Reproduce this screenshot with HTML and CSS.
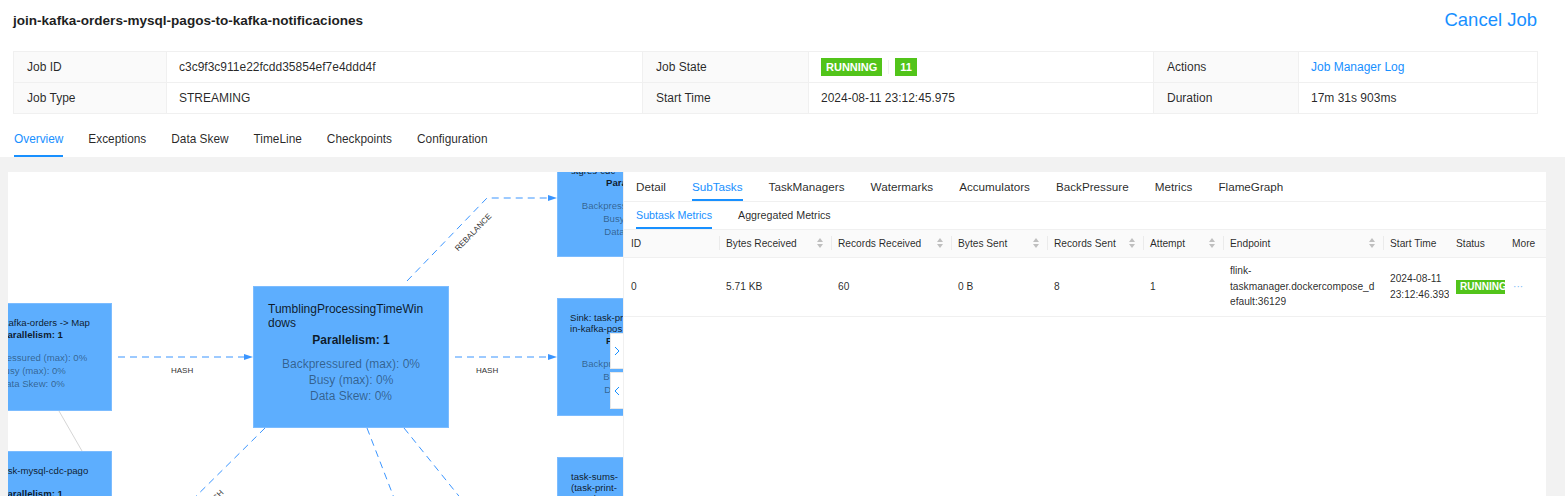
FILE: index.html
```html
<!DOCTYPE html>
<html lang="en">
<head>
<meta charset="utf-8">
<title>Flink Job</title>
<link rel="stylesheet" href="styles.css">
</head>
<body>
<div class="page">
  <header class="job-head">
    <h1 class="job-title">join-kafka-orders-mysql-pagos-to-kafka-notificaciones</h1>
    <a class="cancel">Cancel Job</a>
  </header>

  <table class="desc">
    <colgroup>
      <col class="dc1"><col class="dc2"><col class="dc3"><col class="dc4"><col class="dc5"><col class="dc6">
    </colgroup>
    <tr>
      <th>Job ID</th>
      <td>c3c9f3c911e22fcdd35854ef7e4ddd4f</td>
      <th>Job State</th>
      <td><div class="state"><span class="tag">RUNNING</span><span class="tag-sep"></span><span class="tag">11</span></div></td>
      <th>Actions</th>
      <td><a class="link">Job Manager Log</a></td>
    </tr>
    <tr>
      <th>Job Type</th>
      <td>STREAMING</td>
      <th>Start Time</th>
      <td>2024-08-11 23:12:45.975</td>
      <th>Duration</th>
      <td>17m 31s 903ms</td>
    </tr>
  </table>

  <nav class="tabs">
    <div class="tab active">Overview</div>
    <div class="tab">Exceptions</div>
    <div class="tab">Data Skew</div>
    <div class="tab">TimeLine</div>
    <div class="tab">Checkpoints</div>
    <div class="tab">Configuration</div>
  </nav>

  <main class="content">
    <section class="graph">
      <svg class="edges" width="615" height="325" viewBox="0 0 615 325">
        <path class="solid" d="M51 239 L74 279"/>
        <path class="dash" d="M110 185 H237"/>
        <polygon class="arrow" points="236,182 245,185 236,188"/>
        <path class="dash" d="M447 185 H541"/>
        <polygon class="arrow" points="540,182 549,185 540,188"/>
        <path class="dash" d="M399 109 L479 26 H541"/>
        <polygon class="arrow" points="540,23 549,26 540,29"/>
        <path class="dash" d="M257 256 L163 349"/>
        <path class="dash" d="M359 256 L395 349"/>
        <path class="dash" d="M396 256 L471 349"/>
        <text class="lbl" x="163" y="201">HASH</text>
        <text class="lbl" x="468" y="201">HASH</text>
        <text class="lbl" x="465" y="63" text-anchor="middle" transform="rotate(-46 465 60)">REBALANCE</text>
        <text class="lbl" x="206" y="330" text-anchor="middle" transform="rotate(-45 206 327)">HASH</text>
      </svg>

      <div class="node sm n1">
        <div class="ttl">Source: kafka-orders -&gt; Map</div>
        <div class="par">Parallelism: 1</div>
        <div class="mets"><div>Backpressured (max): 0%</div><div>Busy (max): 0%</div><div>Data Skew: 0%</div></div>
      </div>

      <div class="node sm n2">
        <div class="ttl"><span>Source: task-mysql-cdc-pago</span><span>s</span></div>
        <div class="par">Parallelism: 1</div>
        <div class="mets"><div>Backpressured (max): 0%</div><div>Busy (max): 0%</div><div>Data Skew: 0%</div></div>
      </div>

      <div class="node lg n3">
        <div class="ttl">TumblingProcessingTimeWindows</div>
        <div class="par">Parallelism: 1</div>
        <div class="mets"><div>Backpressured (max): 0%</div><div>Busy (max): 0%</div><div>Data Skew: 0%</div></div>
      </div>

      <div class="node sm n4">
        <div class="ttl"><span>Source: task-po</span><span>stgres-cdc</span></div>
        <div class="par">Parallelism: 1</div>
        <div class="mets"><div>Backpressured (max): 0%</div><div>Busy (max): 0%</div><div>Data Skew: 0%</div></div>
      </div>

      <div class="node sm n5">
        <div class="ttl"><span>Sink: task-print-jo</span><span>in-kafka-pos</span></div>
        <div class="par">Parallelism: 1</div>
        <div class="mets"><div>Backpressured (max): 0%</div><div>Busy (max): 0%</div><div>Data Skew: 0%</div></div>
      </div>

      <div class="node sm n6">
        <div class="ttl"><span>task-sums-</span><span>(task-print-</span><span>sums)</span></div>
        <div class="par">Parallelism: 1</div>
      </div>

      <div class="handle h1"><svg width="6" height="10" viewBox="0 0 6 10"><polyline points="1,1 5,5 1,9"/></svg></div>
      <div class="handle h2"><svg width="6" height="10" viewBox="0 0 6 10"><polyline points="5,1 1,5 5,9"/></svg></div>
    </section>

    <aside class="drawer">
      <nav class="dtabs">
        <div class="dtab">Detail</div>
        <div class="dtab active">SubTasks</div>
        <div class="dtab">TaskManagers</div>
        <div class="dtab">Watermarks</div>
        <div class="dtab">Accumulators</div>
        <div class="dtab">BackPressure</div>
        <div class="dtab">Metrics</div>
        <div class="dtab">FlameGraph</div>
      </nav>
      <nav class="subtabs">
        <div class="subtab active">Subtask Metrics</div>
        <div class="subtab">Aggregated Metrics</div>
      </nav>
      <table class="subtasks">
        <colgroup>
          <col class="w-id"><col class="w-br"><col class="w-rr"><col class="w-bs"><col class="w-rs"><col class="w-at"><col class="w-ep"><col class="w-st"><col class="w-status"><col class="w-more">
        </colgroup>
        <thead>
          <tr>
            <th>ID</th>
            <th><div class="th-in"><span>Bytes Received</span><svg class="sort" width="6" height="10" viewBox="0 0 6 10"><polygon points="0,4 3,0 6,4"/><polygon points="0,6 3,10 6,6"/></svg></div></th>
            <th><div class="th-in"><span>Records Received</span><svg class="sort" width="6" height="10" viewBox="0 0 6 10"><polygon points="0,4 3,0 6,4"/><polygon points="0,6 3,10 6,6"/></svg></div></th>
            <th><div class="th-in"><span>Bytes Sent</span><svg class="sort" width="6" height="10" viewBox="0 0 6 10"><polygon points="0,4 3,0 6,4"/><polygon points="0,6 3,10 6,6"/></svg></div></th>
            <th><div class="th-in"><span>Records Sent</span><svg class="sort" width="6" height="10" viewBox="0 0 6 10"><polygon points="0,4 3,0 6,4"/><polygon points="0,6 3,10 6,6"/></svg></div></th>
            <th><div class="th-in"><span>Attempt</span><svg class="sort" width="6" height="10" viewBox="0 0 6 10"><polygon points="0,4 3,0 6,4"/><polygon points="0,6 3,10 6,6"/></svg></div></th>
            <th><div class="th-in"><span>Endpoint</span><svg class="sort" width="6" height="10" viewBox="0 0 6 10"><polygon points="0,4 3,0 6,4"/><polygon points="0,6 3,10 6,6"/></svg></div></th>
            <th class="st">Start Time</th>
            <th class="fix">Status</th>
            <th class="more-h">More</th>
          </tr>
        </thead>
        <tbody>
          <tr>
            <td>0</td>
            <td>5.71 KB</td>
            <td>60</td>
            <td>0 B</td>
            <td>8</td>
            <td>1</td>
            <td class="ep">flink-taskmanager.dockercompose_default:36129</td>
            <td class="st">2024-08-11 23:12:46.393</td>
            <td class="fix status"><span class="badge">RUNNING</span></td>
            <td class="more">···</td>
          </tr>
        </tbody>
      </table>
    </aside>
  </main>
</div>
</body>
</html>
```

FILE: styles.css
```css
* { box-sizing: border-box; }
html, body { margin: 0; padding: 0; }
body {
  width: 1565px;
  height: 496px;
  overflow: hidden;
  background: #fff;
  font-family: "Liberation Sans", Arial, Helvetica, sans-serif;
  color: rgba(0, 0, 0, 0.85);
}
.page { display: flex; flex-direction: column; height: 496px; }

/* header */
.job-head {
  flex: none;
  display: flex;
  align-items: center;
  justify-content: space-between;
  height: 40px;
  padding: 0 28px 0 13px;
}
.job-title { margin: 0; font-size: 13.55px; font-weight: bold; color: #1f1f1f; }
.cancel { font-size: 18.5px; color: #1890ff; cursor: pointer; }

/* descriptions */
.desc {
  flex: none;
  margin: 11px 0 0 13px;
  width: 1524px;
  border-collapse: collapse;
  table-layout: fixed;
  font-size: 12px;
}
.dc1 { width: 153px; } .dc2 { width: 476px; } .dc3 { width: 166px; }
.dc4 { width: 345px; } .dc5 { width: 145px; } .dc6 { width: 239px; }
.desc th, .desc td {
  height: 31px;
  border: 1px solid #f0f0f0;
  padding: 0 12px;
  text-align: left;
  font-weight: normal;
  white-space: nowrap;
}
.desc th { background: #fafafa; padding-left: 13px; }
.state { display: flex; align-items: center; }
.tag {
  display: inline-block;
  background: #52c41a;
  color: #fff;
  font-weight: bold;
  font-size: 11px;
  line-height: 18px;
  padding: 0 5px;
}
.tag-sep { display: inline-block; width: 1px; height: 14px; background: #f0f0f0; margin: 0 6px; }
.link { color: #1890ff; cursor: pointer; }

/* main tabs */
.tabs {
  flex: none;
  display: flex;
  gap: 25px;
  padding-left: 14px;
  height: 43px;
  font-size: 11.85px;
}
.tab {
  height: 43px;
  padding-top: 16px;
  line-height: 18px;
  border-bottom: 2px solid transparent;
}
.tab.active { color: #1890ff; border-bottom-color: #1890ff; }

/* content */
.content {
  flex: 1;
  min-height: 0;
  display: flex;
  background: #f2f2f2;
  padding: 15px 19px 0 8px;
  overflow: hidden;
}
.graph {
  position: relative;
  flex: none;
  width: 615px;
  background: #fff;
  overflow: hidden;
}
.edges { position: absolute; left: 0; top: 0; }
.dash { fill: none; stroke: #3a95ff; stroke-width: 1; stroke-dasharray: 7 5; }
.solid { fill: none; stroke: #d6d6d6; stroke-width: 1; }
.arrow { fill: #3a95ff; }
.lbl { font-family: "Liberation Sans", Arial, sans-serif; font-size: 8px; fill: #333; }

/* nodes */
.node {
  position: absolute;
  background: #5daefe;
  border: 1px solid #7cbcff;
  color: rgba(0, 0, 0, 0.85);
}
.node .par { text-align: center; font-weight: bold; }
.node .mets { text-align: center; color: rgba(0, 0, 0, 0.45); }
.node.sm { width: 160px; font-size: 9.6px; padding-top: 13px; }
.sm .ttl { line-height: 11px; white-space: nowrap; }
.sm .ttl span { display: block; }
.sm .par { line-height: 14px; }
.sm .mets { margin-top: 9px; line-height: 13px; }
.n1 { left: -56px; top: 131px; height: 108px; }
.n1 .ttl { padding-left: 15px; }
.n2 { left: -56px; top: 279px; height: 130px; }
.n2 .ttl { padding-left: 11px; }
.n4 { left: 549px; top: -32px; height: 117px; }
.n4 .ttl { padding-left: 13px; }
.n5 { left: 549px; top: 126px; height: 118px; }
.n5 .ttl { padding-left: 12px; }
.n6 { left: 549px; top: 285px; height: 130px; }
.n6 .ttl { padding-left: 13px; }

.node.lg {
  left: 245px;
  top: 114px;
  width: 196px;
  height: 142px;
  font-size: 12px;
  padding: 15px 14px 0 14px;
}
.lg .ttl { line-height: 14px; padding-right: 8px; word-break: break-all; }
.lg .par { line-height: 20px; }
.lg .mets { margin-top: 6px; line-height: 16px; }

/* drawer handles */
.handle {
  position: absolute;
  left: 602px;
  width: 14px;
  background: #fff;
  border: 1px solid #e8e8e8;
  border-right: none;
  display: flex;
  align-items: center;
  padding-left: 3px;
}
.handle polyline { fill: none; stroke: #1890ff; stroke-width: 1; }
.h1 { top: 161px; height: 36px; }
.h2 { top: 200px; height: 37px; }

/* drawer */
.drawer {
  flex: 1;
  background: #fff;
  border-left: 1px solid #f0f0f0;
  display: flex;
  flex-direction: column;
  min-width: 0;
}
.dtabs {
  flex: none;
  display: flex;
  gap: 26px;
  padding-left: 12px;
  border-bottom: 1px solid #f0f0f0;
  font-size: 11.7px;
}
.dtab { height: 29px; padding-top: 6px; line-height: 18px; border-bottom: 2px solid transparent; }
.dtab.active { color: #1890ff; border-bottom-color: #1890ff; }
.subtabs {
  flex: none;
  display: flex;
  gap: 26px;
  padding-left: 12px;
  border-bottom: 1px solid #f0f0f0;
  font-size: 10.7px;
}
.subtab { height: 27px; padding-top: 5px; line-height: 16px; border-bottom: 2px solid transparent; }
.subtab.active { color: #1890ff; border-bottom-color: #1890ff; }

.subtasks {
  width: 922px;
  table-layout: fixed;
  border-collapse: collapse;
  font-size: 10.2px;
}
.w-id { width: 95px; } .w-br { width: 112px; } .w-rr { width: 120px; } .w-bs { width: 96px; }
.w-rs { width: 96px; } .w-at { width: 80px; } .w-ep { width: 160px; } .w-st { width: 66px; }
.w-status { width: 56px; } .w-more { width: 41px; }
.subtasks th {
  position: relative;
  height: 27px;
  padding: 0 7px;
  background: #fafafa;
  border-bottom: 1px solid #f0f0f0;
  font-weight: normal;
  text-align: left;
  white-space: nowrap;
}
.subtasks th + th::before {
  content: "";
  position: absolute;
  left: 0;
  top: 50%;
  margin-top: -7px;
  width: 1px;
  height: 14px;
  background: #ebebeb;
}
.subtasks th.fix::before, .subtasks th.more-h::before { display: none; }
.th-in { display: flex; align-items: center; justify-content: space-between; }
.sort { margin-right: 1px; fill: #bfbfbf; flex: none; }
.subtasks td {
  height: 59px;
  padding: 0 7px;
  border-bottom: 1px solid #f0f0f0;
  vertical-align: middle;
  line-height: 15.5px;
}
.subtasks td.ep { padding-right: 7px; overflow-wrap: anywhere; }
.subtasks .st { padding-right: 0; overflow: hidden; }
.subtasks .fix {
  position: relative;
  z-index: 1;
  background: #fff;
  box-shadow: -6px 0 6px -4px rgba(0, 0, 0, 0.13);
}
.subtasks th.fix { background: #fafafa; }
.subtasks td.status { overflow: hidden; white-space: nowrap; padding-right: 0; }
.badge {
  display: inline-block;
  background: #52c41a;
  color: #fff;
  font-weight: bold;
  font-size: 10px;
  line-height: 14px;
  padding: 0 4px;
}
.subtasks td.more { color: #7ab9f7; padding-left: 8px; }
```
